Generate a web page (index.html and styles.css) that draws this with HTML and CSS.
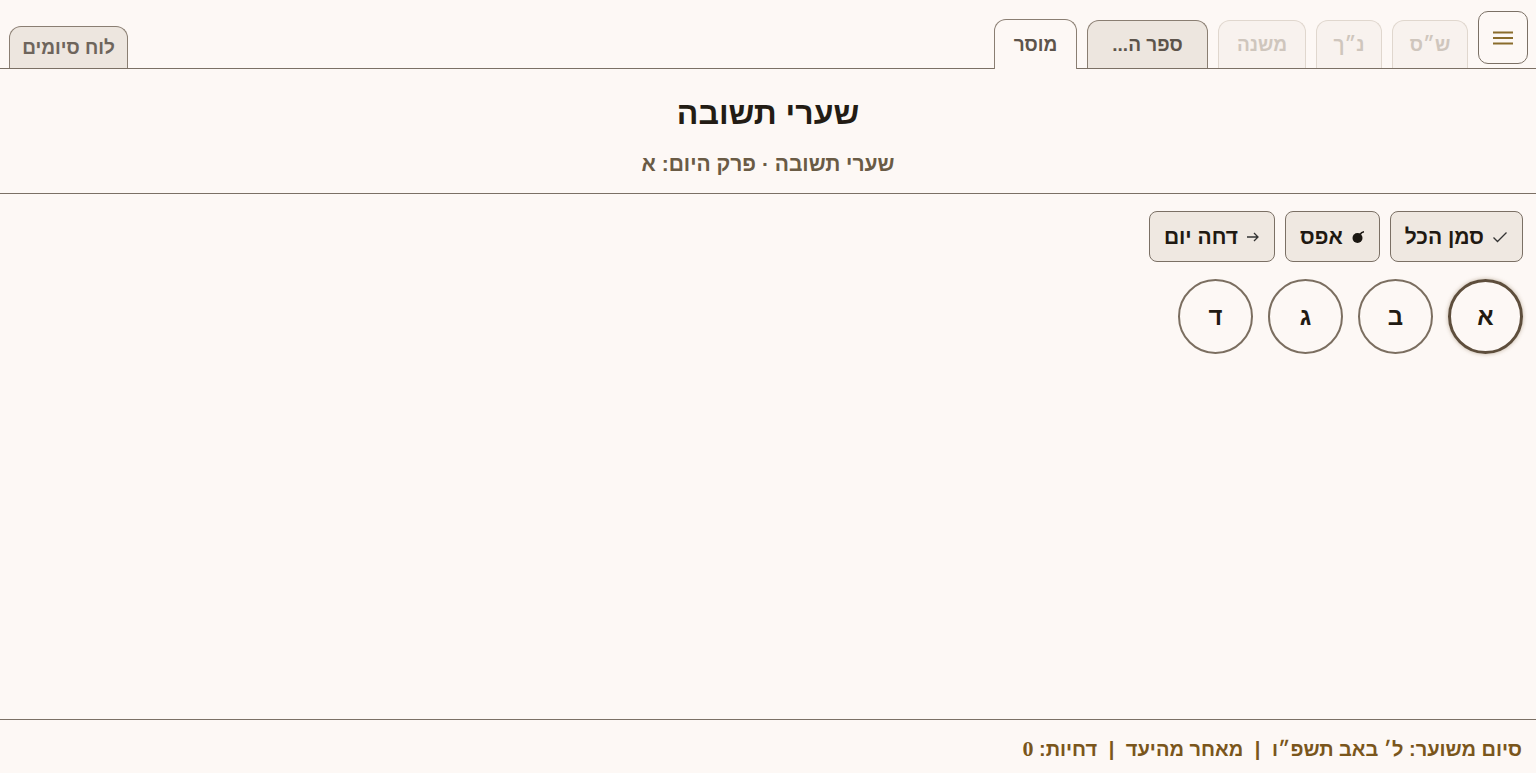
FILE: index.html
```html
<!DOCTYPE html>
<html lang="he" dir="rtl">
<head>
    <meta charset="UTF-8">
    <meta name="viewport" content="width=device-width, initial-scale=1.0">
    <title>לימוד יומי</title>
    <link rel="stylesheet" href="styles.css">
</head>
<body>

    <nav class="tabbar">
        <div class="tabs-main">
            <button class="menu-btn" aria-label="תפריט">
                <svg width="22" height="14" viewBox="0 0 22 14"><path d="M1 1.5h20M1 7h20M1 12.5h20" stroke="#8a6c2c" stroke-width="2" fill="none"/></svg>
            </button>
            <div class="tab faded shas">ש״ס</div>
            <div class="tab faded">נ״ך</div>
            <div class="tab faded mishna">משנה</div>
            <div class="tab shaded">ספר ה...</div>
            <div class="tab active">מוסר</div>
        </div>
        <div class="tab shaded small">לוח סיומים</div>
    </nav>

    <header class="heading">
        <h1>שערי תשובה</h1>
        <div class="sub">שערי תשובה · פרק היום: א</div>
    </header>

    <main class="content">
        <div class="actions">
            <button class="act">
                <svg width="16" height="12" viewBox="0 0 16 12"><path d="M1.5 6.5l4 4L14.5 1.5" stroke="#333" stroke-width="1.3" fill="none"/></svg>
                סמן הכל
            </button>
            <button class="act">
                <svg width="14" height="14" viewBox="0 0 14 14"><circle cx="6.5" cy="8" r="5" fill="#1b1712"/><path d="M9 4.5c1-1.8 2.5-2.6 4-2.7" stroke="#1b1712" stroke-width="1.6" fill="none"/></svg>
                אפס
            </button>
            <button class="act">
                <svg width="14" height="12" viewBox="0 0 14 12"><path d="M1 6h11M8 2l4 4-4 4" stroke="#333" stroke-width="1.3" fill="none"/></svg>
                דחה יום
            </button>
        </div>

        <div class="chapters">
            <div class="chap current">א</div>
            <div class="chap">ב</div>
            <div class="chap">ג</div>
            <div class="chap">ד</div>
        </div>
    </main>

    <footer class="status">
        סיום משוער: ל׳ באב תשפ״ו <span class="sep">|</span> מאחר מהיעד <span class="sep">|</span> דחיות: <span class="num">0</span>
    </footer>

</body>
</html>
```

FILE: styles.css
```css
html, body {
    margin: 0;
    height: 100%;
}
body {
    font-family: "Liberation Sans", Arial, sans-serif;
    background-color: #fdf8f5;
    color: #2a2219;
    display: flex;
    flex-direction: column;
}
button {
    font-family: inherit;
}
.tabbar {
    display: flex;
    justify-content: space-between;
    align-items: flex-end;
    border-bottom: 1px solid #7b7065;
    padding: 0 8px 0 9px;
    height: 68px;
}
.tabs-main {
    display: flex;
    align-items: flex-end;
    gap: 10px;
    height: 100%;
}
.menu-btn {
    align-self: flex-start;
    margin-top: 11px;
    width: 50px;
    height: 53px;
    border: 1px solid #7b7065;
    border-radius: 10px;
    background: #fdf8f5;
    display: flex;
    align-items: center;
    justify-content: center;
    padding: 0;
}
.tab {
    height: 48px;
    box-sizing: border-box;
    padding: 0 8px;
    border: 1px solid #8a7e72;
    border-bottom: none;
    border-radius: 12px 12px 0 0;
    font-size: 19px;
    font-weight: bold;
    white-space: nowrap;
    display: flex;
    align-items: center;
    justify-content: center;
}
.tab.faded {
    background: #f8f2ee;
    border-color: #e0d7ce;
    color: #cfc6bd;
    width: 66px;
}
.tab.faded.shas {
    width: 76px;
}
.tab.faded.mishna {
    width: 88px;
}
.tab.shaded {
    background: #ede6df;
    color: #5d544b;
    width: 121px;
}
.tab.active {
    background: #fdf8f5;
    color: #5d544b;
    height: 50px;
    width: 83px;
    position: relative;
    top: 1px;
}
.tab.small {
    height: 42px;
    width: 119px;
    color: #6e655c;
}
.heading {
    text-align: center;
    border-bottom: 1px solid #7b7065;
    padding: 22px 0 14px;
}
.heading h1 {
    margin: 0;
    font-size: 32px;
    line-height: 44px;
    color: #231c14;
}
.heading .sub {
    margin-top: 14px;
    font-size: 21px;
    font-weight: bold;
    color: #6a5b45;
    line-height: 30px;
}
.content {
    flex: 1;
    padding: 17px 13px 0;
}
.actions {
    display: flex;
    gap: 10px;
}
.act {
    height: 51px;
    box-sizing: border-box;
    padding: 0 14px;
    border: 1px solid #7b7065;
    border-radius: 8px;
    background: #efe8e1;
    color: #1f1912;
    font-size: 21px;
    font-weight: bold;
    display: flex;
    align-items: center;
    gap: 8px;
}
.chapters {
    display: flex;
    gap: 15px;
    margin-top: 17px;
}
.chap {
    width: 75px;
    height: 75px;
    box-sizing: border-box;
    border: 2px solid #7b6e60;
    border-radius: 50%;
    display: flex;
    align-items: center;
    justify-content: center;
    font-size: 24px;
    font-weight: bold;
    color: #221b13;
}
.chap.current {
    border: 3px solid #5e4e3c;
    box-shadow: 0 0 4px rgba(120, 95, 60, 0.45);
}
.status {
    border-top: 1px solid #7b7065;
    height: 54px;
    box-sizing: border-box;
    padding: 0 14px;
    line-height: 58px;
    font-size: 20px;
    font-weight: bold;
    color: #7a561c;
    white-space: nowrap;
}
.status .sep {
    padding: 0 6px;
}
.status .num {
    font-family: "Liberation Serif", serif;
    font-size: 22px;
}
```
